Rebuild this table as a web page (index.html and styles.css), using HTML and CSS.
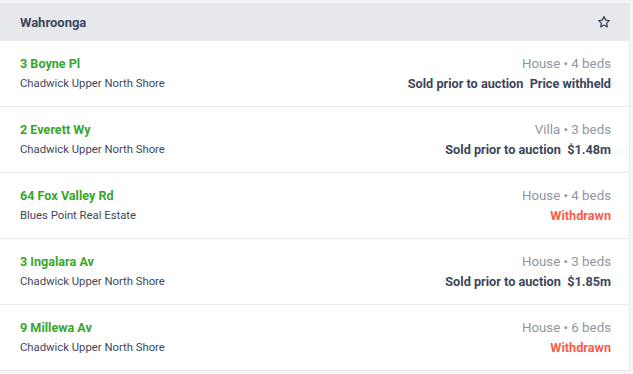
FILE: index.html
```html
<!DOCTYPE html>
<html>
<head>
<meta charset="utf-8">
<link rel="stylesheet" href="styles.css">
</head>
<body>
<div class="card">
  <div class="head">
    <span class="suburb">Wahroonga</span>
    <svg class="star" width="14" height="14" viewBox="0 0 24 24"><path d="M12 2.8l2.8 5.9 6.4.8-4.7 4.4 1.2 6.4L12 17.2l-5.7 3.1 1.2-6.4-4.7-4.4 6.4-.8z" fill="none" stroke="#3c475b" stroke-width="2.2" stroke-linejoin="round"/></svg>
  </div>
  <div class="row">
    <div class="left"><div class="addr">3 Boyne Pl</div><div class="agent">Chadwick Upper North Shore</div></div>
    <div class="right"><div class="meta">House • 4 beds</div><div class="status">Sold prior to auction&nbsp; Price withheld</div></div>
  </div>
  <div class="row">
    <div class="left"><div class="addr">2 Everett Wy</div><div class="agent">Chadwick Upper North Shore</div></div>
    <div class="right"><div class="meta">Villa • 3 beds</div><div class="status">Sold prior to auction&nbsp; $1.48m</div></div>
  </div>
  <div class="row">
    <div class="left"><div class="addr">64 Fox Valley Rd</div><div class="agent">Blues Point Real Estate</div></div>
    <div class="right"><div class="meta">House • 4 beds</div><div class="status red">Withdrawn</div></div>
  </div>
  <div class="row">
    <div class="left"><div class="addr">3 Ingalara Av</div><div class="agent">Chadwick Upper North Shore</div></div>
    <div class="right"><div class="meta">House • 3 beds</div><div class="status">Sold prior to auction&nbsp; $1.85m</div></div>
  </div>
  <div class="row">
    <div class="left"><div class="addr">9 Millewa Av</div><div class="agent">Chadwick Upper North Shore</div></div>
    <div class="right"><div class="meta">House • 6 beds</div><div class="status red">Withdrawn</div></div>
  </div>
</div>
</body>
</html>
```
FILE: styles.css
```css
html, body { margin: 0; padding: 0; }
* { box-sizing: border-box; }
body {
  background: #f4f5f7;
  font-family: "Roboto", "Inter", sans-serif;
  color: #3c475b;
  width: 633px;
  height: 374px;
  overflow: hidden;
}
.card {
  margin-top: 3px;
  width: 630px;
  background: #fff;
  border-right: 1px solid #e9eaed;
}
.head {
  height: 38px;
  background: #e6e8ec;
  display: flex;
  align-items: center;
  justify-content: space-between;
  padding: 0 18px 0 20px;
}
.suburb { font-size: 13px; font-weight: 700; }
.star { display: block; }
.row {
  height: 66px;
  border-bottom: 1px solid #e6e8ec;
  display: flex;
  justify-content: space-between;
  align-items: center;
  padding: 0 18px 0 20px;
}
.left, .right { display: flex; flex-direction: column; gap: 6px; }
.right { align-items: flex-end; }
.addr { color: #3aa52c; font-weight: 700; font-size: 12.6px; line-height: 14px; }
.agent { font-size: 11.3px; line-height: 14px; }
.meta { color: #8f96a1; font-size: 13.3px; line-height: 14px; }
.status { font-weight: 700; font-size: 12.7px; line-height: 14px; }
.red { color: #ff5a47; }
```
